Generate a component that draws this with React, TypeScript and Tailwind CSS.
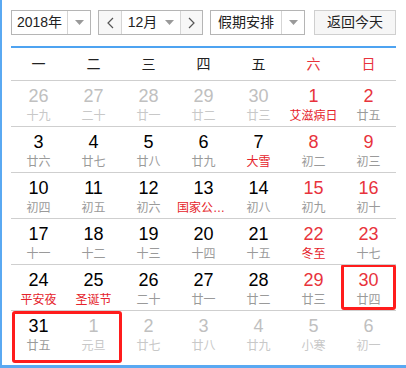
import React from 'react';

type Day = { n: number; l: string; other?: boolean; red?: boolean; lred?: boolean };

const rows: Day[][] = [
  [
    { n: 26, l: '十九', other: true },
    { n: 27, l: '二十', other: true },
    { n: 28, l: '廿一', other: true },
    { n: 29, l: '廿二', other: true },
    { n: 30, l: '廿三', other: true },
    { n: 1, l: '艾滋病日', red: true, lred: true },
    { n: 2, l: '廿五', red: true },
  ],
  [
    { n: 3, l: '廿六' },
    { n: 4, l: '廿七' },
    { n: 5, l: '廿八' },
    { n: 6, l: '廿九' },
    { n: 7, l: '大雪', lred: true },
    { n: 8, l: '初二', red: true },
    { n: 9, l: '初三', red: true },
  ],
  [
    { n: 10, l: '初四' },
    { n: 11, l: '初五' },
    { n: 12, l: '初六' },
    { n: 13, l: '国家公祭日', lred: true },
    { n: 14, l: '初八' },
    { n: 15, l: '初九', red: true },
    { n: 16, l: '初十', red: true },
  ],
  [
    { n: 17, l: '十一' },
    { n: 18, l: '十二' },
    { n: 19, l: '十三' },
    { n: 20, l: '十四' },
    { n: 21, l: '十五' },
    { n: 22, l: '冬至', red: true, lred: true },
    { n: 23, l: '十七', red: true },
  ],
  [
    { n: 24, l: '平安夜', lred: true },
    { n: 25, l: '圣诞节', lred: true },
    { n: 26, l: '二十' },
    { n: 27, l: '廿一' },
    { n: 28, l: '廿二' },
    { n: 29, l: '廿三', red: true },
    { n: 30, l: '廿四', red: true },
  ],
  [
    { n: 31, l: '廿五' },
    { n: 1, l: '元旦', other: true },
    { n: 2, l: '廿七', other: true },
    { n: 3, l: '廿八', other: true },
    { n: 4, l: '廿九', other: true },
    { n: 5, l: '小寒', other: true },
    { n: 6, l: '初一', other: true },
  ],
];

const weekdays = ['一', '二', '三', '四', '五', '六', '日'];

const Caret = () => (
  <svg width="9" height="5" viewBox="0 0 9 5">
    <path d="M0 0 L9 0 L4.5 5 Z" fill="#9a9a9a" />
  </svg>
);

const Chevron = ({ dir }: { dir: 'l' | 'r' }) => (
  <svg width="7" height="12" viewBox="0 0 7 12">
    <polyline
      points={dir === 'l' ? '6,1 1,6 6,11' : '1,1 6,6 1,11'}
      fill="none"
      stroke="#555"
      strokeWidth="1.2"
    />
  </svg>
);

export default function App() {
  return (
    <div
      className="w-[406px] h-[368px] bg-white border-l-2 border-b-[3px] border-[#5aa9f2] pl-[9px] pt-[10px] text-[#222]"
      style={{ fontFamily: '"Liberation Sans", "Noto Sans CJK SC", sans-serif' }}
    >
      <div className="w-[385px]">
        {/* toolbar */}
        <div className="flex items-center h-[25px] text-[14px]">
          <div className="flex h-[25px] w-[80px] border border-[#b5b5b5] bg-white">
            <div className="w-[55px] flex items-center justify-center">2018年</div>
            <div className="flex-1 border-l border-[#d5d5d5] flex items-center justify-center">
              <Caret />
            </div>
          </div>

          <div className="flex h-[25px] w-[105px] ml-[7px] border border-[#b5b5b5] bg-white">
            <div className="w-[22px] flex items-center justify-center bg-[#f7f7f7]">
              <Chevron dir="l" />
            </div>
            <div className="w-[60px] border-l border-r border-[#d5d5d5] flex items-center justify-center gap-[8px]">
              <span>12月</span>
              <Caret />
            </div>
            <div className="flex-1 flex items-center justify-center bg-[#f7f7f7]">
              <Chevron dir="r" />
            </div>
          </div>

          <div className="flex h-[25px] w-[95px] ml-[7px] border border-[#b5b5b5] bg-white">
            <div className="w-[70px] flex items-center justify-center">假期安排</div>
            <div className="flex-1 border-l border-[#d5d5d5] flex items-center justify-center">
              <Caret />
            </div>
          </div>

          <button className="h-[25px] w-[82px] ml-auto border border-[#cfcfcf] bg-[#f6f6f6] flex items-center justify-center">
            返回今天
          </button>
        </div>

        {/* weekday header */}
        <div className="mt-[11px] border-t-2 border-[#4ea3f1] grid grid-cols-7 h-[34px] items-center text-[14px]">
          {weekdays.map((w, i) => (
            <div key={w} className={`text-center ${i >= 5 ? 'text-[#e8333c]' : 'text-[#222]'}`}>
              {w}
            </div>
          ))}
        </div>

        {/* days */}
        {rows.map((row, ri) => (
          <div key={ri} className="relative grid grid-cols-7 h-[46px] border-t border-[#cfcfcf]">
            {row.map((d, ci) => {
              const numColor = d.other ? 'text-[#c0c0c0]' : d.red ? 'text-[#e8333c]' : 'text-black';
              const lunarColor = d.lred && !d.other ? 'text-[#e5232b]' : d.other ? 'text-[#c8c8c8]' : 'text-[#9a9a9a]';
              return (
                <div key={ci} className="relative flex flex-col items-center pt-[4px] overflow-hidden">
                  <div className={`text-[18px] leading-[22px] ${numColor}`}>{d.n}</div>
                  <div className={`text-[12px] leading-[16px] mt-[1px] w-full px-[1px] text-center truncate ${lunarColor}`}>
                    {d.l}
                  </div>
                  {ri === 4 && ci === 6 && (
                    <div className="absolute inset-0 top-[-1px] border-[3px] border-[#ff1c1c] rounded-[3px]" />
                  )}
                </div>
              );
            })}
            {ri === 5 && (
              <div className="absolute left-[1px] top-0 w-[110px] h-[52px] border-[3px] border-[#ff1c1c] rounded-[3px]" />
            )}
          </div>
        ))}
      </div>
    </div>
  );
}
